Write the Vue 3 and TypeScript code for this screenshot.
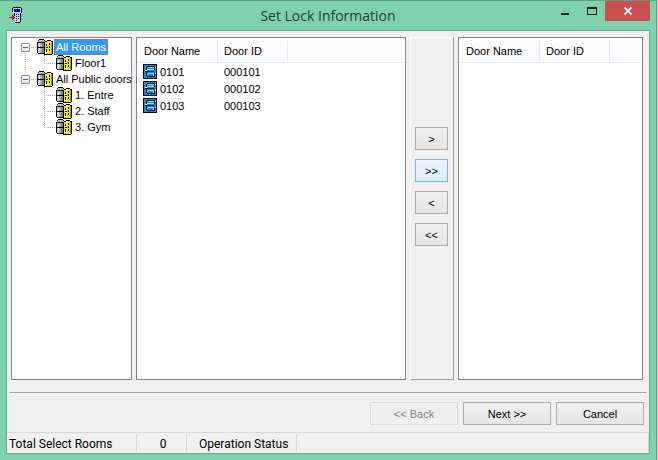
<script setup lang="ts">
import { ref } from 'vue'

interface Door { name: string; id: string }
interface Group { label: string; children: string[] }

const groups: Group[] = [
  { label: 'All Rooms', children: ['Floor1'] },
  { label: 'All Public doors', children: ['1. Entre', '2. Staff', '3. Gym'] },
]
const selected = ref('All Rooms')
const available = ref<Door[]>([
  { name: '0101', id: '000101' },
  { name: '0102', id: '000102' },
  { name: '0103', id: '000103' },
])
const chosen = ref<Door[]>([])

function addAll() {
  chosen.value = chosen.value.concat(available.value)
  available.value = []
}
function removeAll() {
  available.value = available.value.concat(chosen.value)
  chosen.value = []
}
function addOne() {
  const door = available.value.shift()
  if (door) chosen.value.push(door)
}
function removeOne() {
  const door = chosen.value.pop()
  if (door) available.value.unshift(door)
}
</script>

<template>
  <svg class="defs" width="0" height="0" aria-hidden="true">
    <symbol id="building" viewBox="0 0 16 16">
      <path fill="#000" d="M2 0h5v1h1v1h2V1h4v1h2v13h-1v1H7v-1H1v-1H0V3h1V1h1z" />
      <path fill="#b0b0b0" d="M2 1h5v1h1v1H1V2h1zM1 4h6v4H1zM1 9h6v5H1z" />
      <path fill="#d8d8d8" d="M2 1h3v1H2zM1 4h2v4H1zM1 9h2v5H1z" />
      <path fill="#808080" d="M5 4h2v4H5zM5 9h2v5H5z" />
      <path fill="#e02020" d="M5 12h1v1H5z" />
      <path fill="#eee832" d="M8 3h6v12H8zM10 2h4v1h-4z" />
      <path fill="#aaa000" d="M14 3h1v12h-1z" />
      <path fill="#000" d="M9 5h1v2H9zM12 4h1v2h-1zM9 8h2v1H9zM12 7h1v2h-1zM9 10h1v3H9zM12 10h1v2h-1z" />
      <path fill="#fffbc0" d="M10 5h1v1h-1zM10 9h1v1h-1zM10 12h1v1h-1z" />
    </symbol>
    <symbol id="lock" viewBox="0 0 14 15">
      <path fill="#000" d="M0 0h14v15H0z" />
      <path fill="#0d8fe0" d="M1 1h12v13H1z" />
      <path fill="#000" d="M4 2h8v1H4zM3 3h1v3H3zM2 7h9v1H2zM3 8h1v4H3zM4 12h8v1H4zM11 3h1v3h-1zM11 9h1v3h-1z" />
      <path fill="#8fdcff" d="M5 3h6v1H5zM4 5h7v1H4zM5 9h6v1H5zM4 10h1v1H4zM10 10h1v2h-1z" />
      <path fill="#fff" d="M12 3h1v1h-1zM12 9h1v1h-1zM2 6h2v1H2z" />
    </symbol>
  </svg>

  <div class="window">
    <header class="titlebar">
      <svg class="app-icon" viewBox="0 0 14 16" shape-rendering="crispEdges">
        <path fill="#000" d="M4 0h8v1h1v5h-1v9h-1v1H6v-1h5V6h1V1H4zM3 1h1v4H3zM4 5h1v1H4zM5 6h1v3H5z" />
        <path fill="#c9d3e3" d="M4 1h8v5H4zM6 6h5v9H6z" />
        <path fill="#0000d8" d="M5 2h6v3H5zM7 7h1v1H7zM9 7h1v1H9zM7 9h1v1H7zM9 9h1v1H9zM7 11h1v1H7zM9 11h1v1H9zM7 13h1v1H7z" />
        <path fill="#2020c0" d="M3 8h1v1h1v1h1v1H5v1H4v1H3z" />
        <path fill="#f01010" d="M0 10h5v1H0zM3 9h1v3H3z" />
      </svg>
      <h1>Set Lock Information</h1>
      <div class="window-buttons">
        <button type="button" class="cap" aria-label="Minimize">
          <svg viewBox="0 0 11 15" width="11" height="15" shape-rendering="crispEdges"><path fill="#222" d="M0 12h8v2H0z" /></svg>
        </button>
        <button type="button" class="cap" aria-label="Maximize">
          <svg viewBox="0 0 11 15" width="11" height="15" shape-rendering="crispEdges"><path fill="#222" fill-rule="evenodd" d="M0 6h10v8H0zM1 8v5h8V8z" /></svg>
        </button>
        <button type="button" class="close" aria-label="Close">
          <svg viewBox="0 0 8 8" width="8" height="8"><path stroke="#fff" stroke-width="1.8" d="M.5.5l7 7M7.500.5l-7 7" /></svg>
        </button>
      </div>
    </header>

    <main class="client">
      <div class="panes">
        <nav class="tree box" aria-label="Rooms">
          <ul class="roots">
            <li v-for="group in groups" :key="group.label" class="root">
              <div class="node">
                <button type="button" class="toggle" :aria-label="'Collapse ' + group.label"></button>
                <span class="dots"></span>
                <svg class="building" shape-rendering="crispEdges"><use href="#building" /></svg>
                <button type="button" class="label" :class="{ active: selected === group.label }" @click="selected = group.label">{{ group.label }}</button>
              </div>
              <ul class="leaves">
                <li v-for="child in group.children" :key="child" class="node leaf">
                  <span class="branch"></span>
                  <svg class="building" shape-rendering="crispEdges"><use href="#building" /></svg>
                  <button type="button" class="label" :class="{ active: selected === child }" @click="selected = child">{{ child }}</button>
                </li>
              </ul>
            </li>
          </ul>
        </nav>

        <section class="box list" aria-label="Available doors">
          <table>
            <colgroup><col class="c-name" /><col class="c-id" /><col /></colgroup>
            <thead><tr><th>Door Name</th><th>Door ID</th><th></th></tr></thead>
            <tbody>
              <tr v-for="door in available" :key="door.id">
                <td><span class="door"><svg class="lock" shape-rendering="crispEdges"><use href="#lock" /></svg>{{ door.name }}</span></td>
                <td class="id">{{ door.id }}</td>
                <td></td>
              </tr>
            </tbody>
          </table>
        </section>

        <div class="movers">
          <button type="button" class="btn" @click="addOne">&gt;</button>
          <button type="button" class="btn hot" @click="addAll">&gt;&gt;</button>
          <button type="button" class="btn" @click="removeOne">&lt;</button>
          <button type="button" class="btn" @click="removeAll">&lt;&lt;</button>
        </div>

        <section class="box list" aria-label="Selected doors">
          <table>
            <colgroup><col class="c-name" /><col class="c-id" /><col /></colgroup>
            <thead><tr><th>Door Name</th><th>Door ID</th><th></th></tr></thead>
            <tbody>
              <tr v-for="door in chosen" :key="door.id">
                <td><span class="door"><svg class="lock" shape-rendering="crispEdges"><use href="#lock" /></svg>{{ door.name }}</span></td>
                <td class="id">{{ door.id }}</td>
                <td></td>
              </tr>
            </tbody>
          </table>
        </section>
      </div>

      <div class="actions">
        <button type="button" class="btn" disabled>&lt;&lt; Back</button>
        <button type="button" class="btn">Next &gt;&gt;</button>
        <button type="button" class="btn">Cancel</button>
      </div>

      <footer class="status">
        <span class="total">Total Select Rooms</span>
        <span class="count">{{ chosen.length }}</span>
        <span class="operation">Operation Status</span>
        <span class="rest"></span>
      </footer>
    </main>
  </div>
</template>

<style>
body {
  background: #b5d9c8;
}
</style>

<style scoped>
* {
  box-sizing: border-box;
}
.defs {
  position: absolute;
}
button {
  padding: 0;
  border: 0;
  background: none;
  color: inherit;
  font: inherit;
}
.window {
  display: flex;
  flex-direction: column;
  min-height: 100vh;
  margin-right: 1px;
  padding: 0 6px 6px;
  border-top: 1px solid #609f83;
  border-right: 1px solid #609f83;
  background: #7dd2ab;
  color: #000;
  font: 11px/16px "Liberation Sans", sans-serif;
}
.titlebar {
  display: grid;
  grid-template-columns: 97px 1fr 97px;
  height: 29px;
}
.app-icon {
  width: 14px;
  height: 16px;
  margin: 6px 0 0 3px;
}
h1 {
  margin: 0;
  color: #2b3f38;
  font: 14px/29px "Open Sans", "Noto Sans", sans-serif;
  text-align: center;
}
.window-buttons {
  display: flex;
  align-items: flex-start;
  justify-content: flex-end;
}
.cap {
  display: flex;
  justify-content: center;
  width: 26px;
}
.close {
  display: flex;
  flex: none;
  align-items: center;
  justify-content: center;
  width: 45px;
  height: 20px;
  background: #c75050;
}
.client {
  display: flex;
  flex: 1;
  flex-direction: column;
  border: 1px solid #65ad8c;
  background: #f0f0f0;
}
.panes {
  display: grid;
  flex: 1;
  grid-template-columns: 121px 270fr 44px 185fr;
  gap: 4px;
  padding: 6px 6px 12px 4px;
}
.box {
  border: 1px solid #828790;
  background: #fff;
}
.tree {
  padding: 1px 0 0 9px;
}
ul {
  margin: 0;
  padding: 0;
  list-style: none;
}
.root:not(:last-child) {
  background: linear-gradient(#fff 50%, #aaa 50%) 4px 13px / 1px 2px repeat-y;
}
.root:not(:last-child) > .node {
  background: linear-gradient(#fff, #fff) 4px 0 / 1px 12px no-repeat;
}
.node {
  display: flex;
  align-items: center;
  height: 16px;
}
.toggle {
  flex: none;
  width: 9px;
  height: 9px;
  border: 1px solid #919191;
  border-radius: 1px;
  background: linear-gradient(#4b63a7, #4b63a7) center / 5px 1px no-repeat, linear-gradient(#fff, #e4e4e4);
}
.dots {
  flex: none;
  width: 7px;
  height: 1px;
  background: linear-gradient(90deg, #fff 50%, #aaa 50%) 0 0 / 2px 1px;
}
.building {
  flex: none;
  width: 16px;
  height: 16px;
}
.label {
  height: 16px;
  margin-left: 1px;
  padding: 0 2px;
  white-space: nowrap;
}
.label.active {
  background: #3399ff;
  color: #fff;
  outline: 1px dotted #c66a10;
  outline-offset: -1px;
}
.leaves {
  margin-left: 23px;
}
.branch {
  flex: none;
  width: 12px;
  height: 16px;
  background:
    linear-gradient(90deg, #aaa 50%, transparent 50%) 0 8px / 2px 1px repeat-x,
    linear-gradient(#aaa 50%, transparent 50%) 0 0 / 1px 2px repeat-y;
}
.leaf:last-child .branch {
  background:
    linear-gradient(#fff, #fff) 0 9px / 1px 7px no-repeat,
    linear-gradient(90deg, #aaa 50%, transparent 50%) 0 8px / 2px 1px repeat-x,
    linear-gradient(#aaa 50%, transparent 50%) 0 0 / 1px 2px repeat-y;
}
.list {
  padding: 1px;
}
table {
  width: 100%;
  border-collapse: separate;
  border-spacing: 0;
  table-layout: fixed;
}
.c-name {
  width: 80px;
}
.c-id {
  width: 70px;
}
th {
  height: 24px;
  padding: 0 6px;
  border-right: 1px solid #e3eefa;
  border-bottom: 1px solid #e3eefa;
  background: #fcfcfc;
  font-weight: normal;
  text-align: left;
}
th:last-child {
  border-right: 0;
}
td {
  height: 17px;
  padding: 0;
}
.id {
  padding-left: 6px;
}
.door {
  display: flex;
  gap: 3px;
  align-items: center;
  padding-left: 5px;
}
.lock {
  width: 14px;
  height: 15px;
}
.movers {
  display: flex;
  flex-direction: column;
  gap: 9px;
  align-items: flex-start;
  padding: 89px 0 0 4px;
  border: 1px solid #a0a0a0;
  border-top-color: #fff;
  border-left-color: #fff;
}
.btn {
  height: 23px;
  border: 1px solid #acacac;
  background: linear-gradient(#f0f0f0, #e5e5e5);
}
.movers .btn {
  width: 33px;
}
.movers .hot {
  border-color: #7eb4ea;
  background: linear-gradient(#ecf4fc, #dcecfc);
}
.actions {
  display: flex;
  gap: 5px;
  justify-content: flex-end;
  margin: 0 3px;
  padding: 9px 2px 7px;
  border-top: 1px solid #a0a0a0;
  box-shadow: inset 0 1px #fff;
}
.actions .btn {
  width: 88px;
}
.actions .btn:disabled {
  border-color: #d9d9d9;
  background: #efefef;
  color: #838383;
}
.status {
  display: flex;
  height: 21px;
  padding: 1px 0;
  border-top: 1px solid #d7d7d7;
  font: 12px/20px Roboto, "Liberation Sans", sans-serif;
}
.status span {
  border-right: 1px solid #d7d7d7;
  white-space: nowrap;
}
.total {
  width: 130px;
  padding-left: 2px;
}
.count {
  width: 50px;
  padding-left: 3px;
  text-align: center;
}
.operation {
  width: 110px;
  padding-left: 12px;
}
.status .rest {
  flex: 1;
}
</style>
